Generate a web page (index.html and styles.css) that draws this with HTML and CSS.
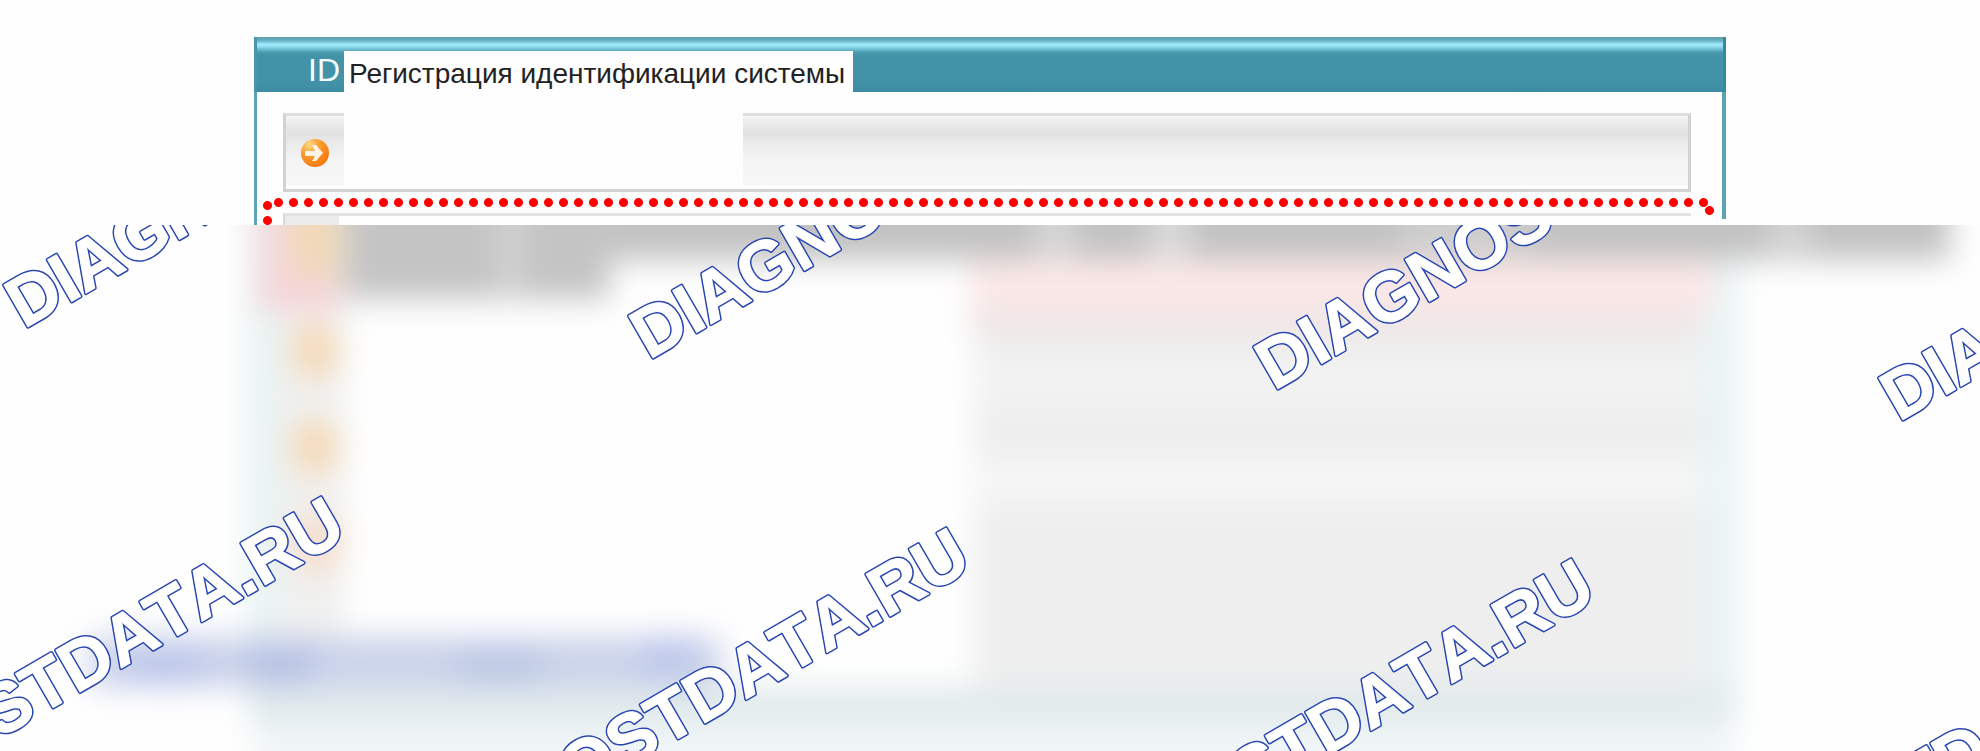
FILE: index.html
```
<!DOCTYPE html>
<html lang="ru">
<head>
    <meta charset="UTF-8">
    <title>Регистрация идентификации системы</title>
    <link rel="stylesheet" href="styles.css">
</head>

<body>
    <div class="top">
        <div class="window">
            <div class="header">
                <span class="id">ID</span>
                <h1 class="title">Регистрация идентификации системы</h1>
            </div>
            <div class="row">
                <div class="row-icon">
                    <svg width="30" height="30" viewBox="0 0 30 30">
                        <defs>
                            <radialGradient id="orange" cx="0.3" cy="0.2" r="0.9">
                                <stop offset="0" stop-color="#ffd98a"/>
                                <stop offset="0.4" stop-color="#f99c30"/>
                                <stop offset="1" stop-color="#f4740a"/>
                            </radialGradient>
                        </defs>
                        <circle cx="15" cy="15" r="14" fill="url(#orange)"/>
                        <path d="M5 13h10l-3-6h4l7 8-7 8h-4l3-5H5z" fill="#fff4e4"/>
                    </svg>
                </div>
                <div class="row-blank"></div>
            </div>
            <div class="marked">
                <div class="dots"></div>
                <div class="row-next">
                    <div class="row-next-icon"></div>
                </div>
            </div>
        </div>
    </div>

    <div class="bottom">
        <!-- размытый фон -->
        <svg class="haze" viewBox="0 0 1980 526" preserveAspectRatio="none">
            <defs>
                <filter id="soft" filterUnits="userSpaceOnUse" x="-60" y="-80" width="2100" height="760" color-interpolation-filters="sRGB">
                    <feGaussianBlur stdDeviation="15"/>
                </filter>
            </defs>
            <g filter="url(#soft)">
                <rect x="-60" y="-80" width="2100" height="760" fill="#fefefe"/>
                <rect x="246" y="-60" width="99" height="560" fill="#e8f3f3"/>
                <rect x="278" y="-60" width="65" height="530" fill="#f0f0ef"/>
                <rect x="974" y="-60" width="766" height="540" fill="#e9f4f5"/>
                <rect x="974" y="-60" width="730" height="540" fill="#eeeeee"/>
                <rect x="974" y="135" width="730" height="40" fill="#f3f3f3"/>
                <rect x="974" y="236" width="730" height="40" fill="#f6f6f6"/>
                <rect x="254" y="462" width="1480" height="40" fill="#e1eaec"/>
                <rect x="254" y="500" width="1480" height="120" fill="#f1f6f8"/>
                <rect x="970" y="30" width="745" height="54" fill="#fce8e8"/>
                <rect x="970" y="82" width="730" height="26" fill="#efe5e5"/>
                <rect x="345" y="-60" width="1605" height="95" fill="#c2c2c2"/>
                <rect x="345" y="-60" width="265" height="134" fill="#c4c4c4"/>
                <rect x="500" y="-60" width="20" height="130" fill="#d6d6d6"/>
                <rect x="1035" y="-60" width="40" height="95" fill="#d6d6d6"/>
                <rect x="1150" y="-60" width="40" height="95" fill="#dadada"/>
                <rect x="1400" y="-60" width="130" height="90" fill="#cecece"/>
                <rect x="1770" y="-60" width="40" height="90" fill="#d4d4d4"/>
                <rect x="256" y="-60" width="50" height="145" fill="#f3dade"/>
                <rect x="290" y="-60" width="50" height="145" fill="#f2d8b6"/>
                <rect x="262" y="50" width="76" height="35" fill="#f5d4d8"/>
                <ellipse cx="315" cy="126" rx="25" ry="28" fill="#f5d9b8"/>
                <ellipse cx="315" cy="222" rx="25" ry="28" fill="#f5d9b8"/>
                <ellipse cx="318" cy="318" rx="25" ry="32" fill="#f5decc"/>
                <rect x="90" y="412" width="630" height="50" fill="#cbd3ea"/>
                <ellipse cx="165" cy="440" rx="45" ry="20" fill="#bcc6ea"/>
                <ellipse cx="280" cy="440" rx="40" ry="22" fill="#b8c3e4"/>
                <ellipse cx="500" cy="440" rx="50" ry="20" fill="#bcc8e4"/>
                <ellipse cx="668" cy="432" rx="30" ry="22" fill="#bcc6ea"/>
            </g>
        </svg>

        <!-- водяные знаки -->
        <svg class="marks">
            <g class="outer">
                <g id="marks">
                    <text transform="translate(24 104) rotate(-30)">DIAGNOSTDATA.RU</text>
                    <text transform="translate(649 135) rotate(-30)">DIAGNOSTDATA.RU</text>
                    <text transform="translate(1274 166) rotate(-30)">DIAGNOSTDATA.RU</text>
                    <text transform="translate(1899 197) rotate(-30)">DIAGNOSTDATA.RU</text>
                    <text transform="translate(-244 654) rotate(-30)">DIAGNOSTDATA.RU</text>
                    <text transform="translate(381 685) rotate(-30)">DIAGNOSTDATA.RU</text>
                    <text transform="translate(1006 716) rotate(-30)">DIAGNOSTDATA.RU</text>
                    <text transform="translate(1631 747) rotate(-30)">DIAGNOSTDATA.RU</text>
                </g>
            </g>
            <!-- белая заливка поверх синего контура -->
            <use class="inner" href="#marks"/>
        </svg>
    </div>
</body>

</html>
```
FILE: styles.css
```
body {
    margin: 0;
    min-height: 100vh;
    display: flex;
    flex-direction: column;
    background: #fefefe;
    font-family: "Liberation Sans", Arial, sans-serif;
    overflow: hidden;
}

.top {
    height: 225px;
    box-sizing: border-box;
    padding: 37px 254px 0;
    overflow: hidden;
}

.window {
    height: 188px;
    /* боковые рамки */
    background:
        linear-gradient(#5ba4b4, #5ba4b4) left top / 3px 100% no-repeat,
        linear-gradient(#5ba4b4, #5ba4b4) right top / 4px 182px no-repeat;
}

.header {
    display: flex;
    height: 55px;
    background: linear-gradient(#5b9dab 0, #6ab4c4 4px, #9ceafc 7px, #96e4f6 9px, #4d9db0 15px, #4393a8 18px, #4393a8 45px, #3d8ca3 54px);
    border-left: 3px solid #4894a8;
    border-right: 3px solid #368a9e;
    box-sizing: border-box;
}

.id {
    width: 87px;
    padding: 14px 4px 0 0;
    box-sizing: border-box;
    text-align: right;
    color: #f4fdff;
    font-size: 32px;
    line-height: 38px;
}

.title {
    margin: 14px 0 0;
    padding: 2px 8px 0 5px;
    background: #fefefe;
    color: #222;
    font-size: 28px;
    font-weight: normal;
    line-height: 42px;
    white-space: nowrap;
}

.row {
    display: flex;
    height: 79px;
    box-sizing: border-box;
    margin: 21px 35px 0 29px;
    border: 3px solid #d2d2d2;
    border-top-color: #dedede;
    background: linear-gradient(#f6f6f6 0, #e9e9e9 8px, #e2e2e2 18px, #ececec 30px, #f5f5f5 46px, #f7f7f7 69px, #fefefe 71px);
}

.row-icon {
    width: 58px;
    display: flex;
    align-items: center;
    justify-content: center;
}

.row-blank {
    width: 399px;
    margin-top: -3px;
    background: #fefefe;
}

/* красная пунктирная рамка */
.marked {
    height: 30px;
    margin: 3px 9px 0 6px;
    background:
        radial-gradient(circle, #f00 4px, transparent 5px) 0 3px / 15px 15px repeat-y,
        radial-gradient(circle, #f00 4px, transparent 5px) right 8px / 15px 15px no-repeat;
}

.dots {
    height: 15px;
    margin: 0 6px 0 11px;
    background: radial-gradient(circle, #f00 4px, transparent 5px) 0 0 / 15px 15px repeat-x;
}

.row-next {
    height: 12px;
    margin: 3px 26px 0 23px;
    border-top: 3px solid #e4e4e4;
    border-left: 2px solid #d8d8d8;
}

.row-next-icon {
    width: 54px;
    height: 12px;
    background: #ececec;
}

.bottom {
    position: relative;
    flex: 1;
    overflow: hidden;
}

.haze,
.marks {
    position: absolute;
    left: 0;
    top: 0;
    width: 100%;
    height: 100%;
}

.marks {
    font-size: 70px;
    font-weight: bold;
    font-kerning: none;
    fill: #fff;
    stroke-linejoin: round;
}

.outer {
    stroke: #2845b0;
    stroke-width: 4px;
}

.inner {
    stroke: #fff;
    stroke-width: 1px;
}
```
